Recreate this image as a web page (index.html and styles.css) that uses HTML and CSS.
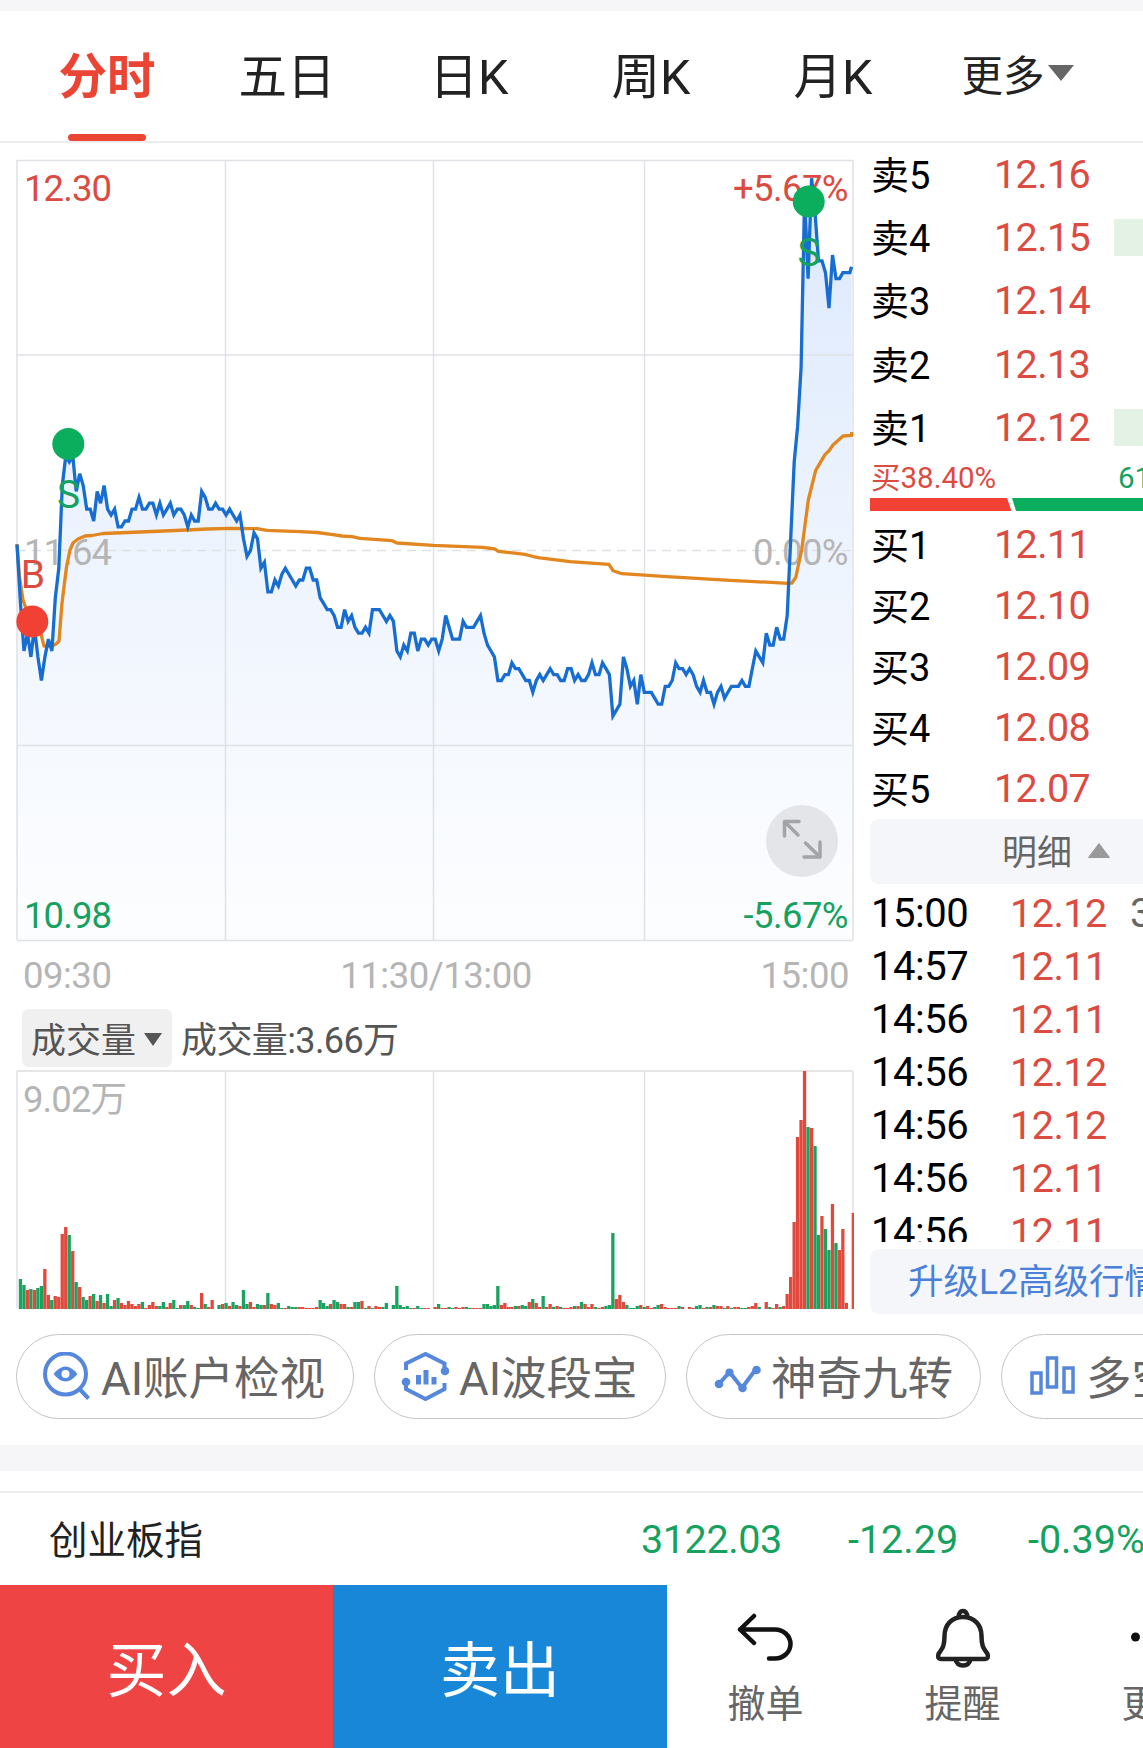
FILE: index.html
```
<!DOCTYPE html>
<html lang="zh-CN">
<head>
  <meta charset="UTF-8" />
  <title>分时</title>
  <link rel="stylesheet" href="styles.css">
</head>
<body>
  <nav class="tabs">
    <a class="tab active">分时</a>
    <a class="tab">五日</a>
    <a class="tab">日K</a>
    <a class="tab">周K</a>
    <a class="tab">月K</a>
    <a class="tab more">更多<svg width="28" height="18" viewBox="0 0 28 18"><path d="M1 1h26L14 17z" fill="#666"/></svg></a>
  </nav>

  <main class="quote">
    <section class="charts">
      <svg class="price-chart" viewBox="0 143 870 802" width="870" height="802">
        <defs>
          <linearGradient id="fill" gradientUnits="userSpaceOnUse" x1="0" y1="170" x2="0" y2="940">
            <stop offset="0" stop-color="#2a77f0" stop-opacity="0.17"/>
            <stop offset="0.5" stop-color="#2a77f0" stop-opacity="0.08"/>
            <stop offset="1" stop-color="#2a77f0" stop-opacity="0.01"/>
          </linearGradient>
        </defs>
        <path id="area" fill="url(#fill)"/>
        <path class="grid" d="M17 160.5H853M17 355H853M17 745.5H853M17 940.5H853M17 160V940M225.5 160V940M433.5 160V940M644.5 160V940M853 160V940"/>
        <path class="grid dash" d="M17 550.5H853"/>
        <text class="label up" x="24" y="201">12.30</text>
        <text class="label up end" x="848" y="201">+5.67%</text>
        <text class="label flat" x="24" y="565">11.64</text>
        <text class="label flat end" x="848" y="565">0.00%</text>
        <text class="label down" x="24" y="928">10.98</text>
        <text class="label down end" x="848" y="928">-5.67%</text>
        <polyline class="avg" points="17,544 19.5,577 23,600 30,620 41,634 44,646 52,646 56,644 59,641 62,603 66.5,567 70,550 73,543 78,539 85,536 92,535.5 103,533.5 140,532 187,530 207,529 230,528.3 257,528.7 267,530.3 300,531.7 317,532.5 333,534.7 342,536 352,536.7 360,538.3 392,540.7 397,543 433,545.3 483,547.3 495,549 498,551.3 525,554.3 535,557 540,557.8 570,561.7 609,564.3 613,570.7 622,573.7 667,576.7 730,580.3 788,583.3 791.7,583.2 795.7,577.5 801.7,550 808.3,500 815.7,470.4 825,454.6 829,450.7 833,445 843,436 851.7,435.4 851.7,432"/>
        <polyline id="price" class="price"/>
        <circle cx="32.3" cy="621.5" r="16" fill="#f04134"/>
        <circle cx="68.3" cy="444" r="16" fill="#0aae5d"/>
        <circle cx="808.7" cy="201.5" r="16" fill="#0aae5d"/>
        <text class="mark up" x="33" y="588">B</text>
        <text class="mark down" x="68.5" y="508">S</text>
        <text class="mark down" x="809" y="265.5">S</text>
        <circle cx="802" cy="841" r="36" fill="#e3e5e9"/>
        <path class="expand" d="M799 821.5H784.5V836M784.5 821.5L798 835M820 842V857H804M820 857L805.500 843"/>
      </svg>
      <div class="time-axis"><span>09:30</span><span>11:30/13:00</span><span>15:00</span></div>
      <div class="vol-head">
        <span class="vol-select">成交量<svg width="18" height="13" viewBox="0 0 18 13"><path d="M0 0h18L9 13z" fill="#555"/></svg></span>
        <span class="vol-now">成交量:3.66万</span>
      </div>
      <svg class="vol-chart" viewBox="0 1069 870 241" width="870" height="241">
        <path class="grid" d="M17 1071V1308M225.500 1071V1308M433.500 1071V1308M644.500 1071V1308M853 1071V1308"/>
        <path class="grid top" d="M17 1071H853"/>
        <text class="label flat" x="23" y="1112">9.02万</text>
        <g id="bars"></g>
      </svg>
    </section>

    <aside class="book">
      <div class="sells">
        <div class="level"><span>卖5</span><b>12.16</b></div>
        <div class="level"><span>卖4</span><b>12.15</b><i></i></div>
        <div class="level"><span>卖3</span><b>12.14</b></div>
        <div class="level"><span>卖2</span><b>12.13</b></div>
        <div class="level"><span>卖1</span><b>12.12</b><i></i></div>
      </div>
      <div class="ratio"><span class="up">买38.40%</span><span class="down">61.60%卖</span></div>
      <svg class="ratio-bar" width="273" height="13" viewBox="0 0 273 13">
        <path d="M0 0H137L141.500 13H0z" fill="#f04134"/>
        <path d="M142 0H273V13H146z" fill="#0aae5d"/>
      </svg>
      <div class="buys">
        <div class="level"><span>买1</span><b>12.11</b></div>
        <div class="level"><span>买2</span><b>12.10</b></div>
        <div class="level"><span>买3</span><b>12.09</b></div>
        <div class="level"><span>买4</span><b>12.08</b></div>
        <div class="level"><span>买5</span><b>12.07</b></div>
      </div>
      <div class="detail-bar">明细<svg width="24" height="16" viewBox="0 0 24 16"><path d="M1.500 15.500L12 1.500l10.500 14z" fill="#999" stroke="#999" stroke-linejoin="round"/></svg></div>
      <div class="deals">
        <div class="deal"><span>15:00</span><b>12.12</b><em>36594</em></div>
        <div class="deal"><span>14:57</span><b>12.11</b></div>
        <div class="deal"><span>14:56</span><b>12.11</b></div>
        <div class="deal"><span>14:56</span><b>12.12</b></div>
        <div class="deal"><span>14:56</span><b>12.12</b></div>
        <div class="deal"><span>14:56</span><b>12.11</b></div>
        <div class="deal"><span>14:56</span><b>12.11</b></div>
      </div>
      <div class="level2">升级L2高级行情</div>
    </aside>
  </main>

  <div class="chips">
    <a class="chip chip-account">
      <svg width="48" height="50" viewBox="0 0 48 50" fill="none" stroke="#5588dc" stroke-width="4">
        <circle cx="22.500" cy="22" r="20.500"/>
        <path d="M36.500 37l9 9.500"/>
        <path d="M10.500 22Q22.500 7 34.500 22Q22.500 37 10.500 22z" fill="#5588dc" stroke="none"/>
        <circle cx="22.500" cy="22" r="4" fill="#fff" stroke="none"/>
      </svg><span>AI账户检视</span>
    </a>
    <a class="chip chip-band">
      <svg width="48" height="50" viewBox="0 0 48 50" fill="none" stroke="#5588dc" stroke-width="4">
        <path d="M5 18V11.500L24.500 2L43.500 11.500V20"/>
        <path d="M5 30V37L24.500 47L43.500 37V31"/>
        <circle cx="44" cy="19" r="4.300" fill="#5588dc" stroke="none"/>
        <circle cx="5" cy="30" r="4.300" fill="#5588dc" stroke="none"/>
        <path d="M17.500 23V32.500M25 18V32.500M33 25V32.500" stroke-width="5"/>
      </svg><span>AI波段宝</span>
    </a>
    <a class="chip chip-nine">
      <svg width="48" height="50" viewBox="0 0 48 50" fill="none" stroke="#5588dc" stroke-width="4">
        <path d="M6 32L16.500 20L29 36L43 17"/>
        <g fill="#5588dc" stroke="none">
          <circle cx="6" cy="32" r="4.300"/><circle cx="16.500" cy="20.500" r="4"/><circle cx="29.500" cy="36" r="4.300"/><circle cx="43.500" cy="18" r="4.300"/>
        </g>
      </svg><span>神奇九转</span>
    </a>
    <a class="chip chip-long">
      <svg width="48" height="50" viewBox="0 0 48 50" fill="none" stroke="#5588dc" stroke-width="3.500">
        <rect x="4" y="21" width="9" height="20"/><rect x="19.500" y="6" width="9" height="29"/><rect x="36" y="16" width="9" height="24"/>
      </svg><span>多空趋势</span>
    </a>
  </div>

  <div class="gap"></div>

  <div class="index-row">
    <span class="name">创业板指</span>
    <span>3122.03</span>
    <span>-12.29</span>
    <span>-0.39%</span>
  </div>

  <footer class="actions">
    <a class="buy">买入</a>
    <a class="sell">卖出</a>
    <a class="tool">
      <svg width="60" height="60" viewBox="0 0 60 60" fill="none" stroke="#111" stroke-width="4.500" stroke-linecap="round" stroke-linejoin="round">
        <path d="M18 8L4 21.500L18 35M4 21.500H39A15.500 14.500 0 0 1 39 50.500H33"/>
      </svg>撤单
    </a>
    <a class="tool">
      <svg width="60" height="60" viewBox="0 0 60 60" fill="none" stroke="#222" stroke-width="4.500" stroke-linejoin="round">
        <path d="M30 9C18.500 9 11.500 17 11.500 28C11.500 40 8.500 41 5.500 46Q4 51 8 51H52Q56 51 54.500 46C51.500 41 48.500 40 48.500 28C48.500 17 41.500 9 30 9z"/>
        <path d="M25.500 9.500Q26 3 30 3Q34 3 34.500 9.500M22.500 51.500Q24 57.500 30 57.500Q36 57.500 37.500 51.500"/>
      </svg>提醒
    </a>
    <a class="tool">
      <svg width="60" height="60" viewBox="0 0 60 60" fill="#111"><circle cx="5.500" cy="29" r="4.500"/><circle cx="30" cy="29" r="4.500"/><circle cx="55" cy="29" r="4.500"/></svg>更多
    </a>
  </footer>

<script src="chart.js"></script>
</body>
</html>
```
FILE: styles.css
```
* { box-sizing: border-box; }
html { overflow: hidden; }
body { margin: 0; width: 1143px; height: 1748px; overflow: hidden; background: #fff; color: #000; font-family: Roboto, "Noto Sans CJK SC", sans-serif; }
b, i, em { font-weight: normal; font-style: normal; }
svg { display: block; flex: none; }
.up { color: #dc4b3f; fill: #dc4b3f; }
.down { color: #15a25f; fill: #15a25f; }

.tabs { height: 143px; border-top: 11px solid #f6f6f9; border-bottom: 2px solid #ededed; display: flex; padding-left: 20px; }
.tab { width: 182px; height: 130px; display: flex; flex-direction: column; align-items: center; justify-content: center; padding: 0 0 6px 4px; font-size: 48.500px; color: #222; white-space: nowrap; }
.tab.active { width: 174px; padding: 0; color: #ea4435; font-weight: bold; justify-content: flex-end; line-height: 78px; }
.tab.active::after { content: ""; width: 78px; height: 7px; border-radius: 4px; background: #ea4435; margin-top: 17px; }
.tab.more { flex-direction: row; width: 190px; font-size: 41.500px; padding-left: 2px; gap: 2px; }

.quote { display: flex; height: 1171px; }
.charts { width: 870px; flex: none; }
.grid { fill: none; stroke: #dfe1e5; stroke-width: 1.5; }
.grid.top { stroke: #e6e6e6; stroke-width: 2; }
.grid.dash { stroke-dasharray: 9 6; }
.label { font-size: 36.500px; letter-spacing: -0.9px; }
.end { text-anchor: end; letter-spacing: -0.6px; }
.flat { fill: #b5b5b5; }
.mark { font-size: 39px; text-anchor: middle; }
.avg { fill: none; stroke: #e2861f; stroke-width: 3.300; stroke-linejoin: round; }
.price { fill: none; stroke: #186dd0; stroke-width: 3.300; }
.expand { fill: none; stroke: #a3a4a7; stroke-width: 3.500; stroke-linecap: round; stroke-linejoin: round; }
.time-axis { height: 64px; padding: 0 21px 4px 23px; display: flex; justify-content: space-between; align-items: center; font-size: 36.500px; letter-spacing: -0.5px; color: #b5b5b5; }
.vol-head { height: 60px; padding: 0 0 2px 22px; display: flex; align-items: center; gap: 9px; font-size: 36px; color: #555; }
.vol-select { height: 58px; width: 150px; padding: 0 0 2px 9px; display: flex; align-items: center; gap: 8px; font-size: 35px; background: #f0f0f0; border-radius: 7px; }
.vol-select svg { margin-top: 4px; }
.vol-now { letter-spacing: -0.6px; padding-bottom: 3px; }

.book { width: 273px; overflow: hidden; }
.level { height: 63.200px; display: flex; align-items: center; font-size: 39.500px; white-space: nowrap; }
.level span { width: 124px; padding: 0 0 4px 1px; font-size: 38px; }
.level b { width: 120px; color: #dc4b3f; letter-spacing: -0.6px; }
.level i { flex: 1; height: 37px; background: #e3f2e5; }
.ratio { height: 34px; margin-top: 2px; padding: 0 0 5px 1px; display: flex; align-items: center; font-size: 29.500px; white-space: nowrap; }
.ratio .up { width: 247px; flex: none; }
.ratio-bar { margin-top: 3px; }
.buys .level { height: 61px; }
.buys { margin-top: 3px; }
.detail-bar { height: 65px; padding: 0 0 3px 132px; display: flex; align-items: center; gap: 15px; font-size: 35px; color: #666; background: #f5f6f9; border-radius: 9px 0 0 9px; }
.deals { margin-top: 3px; height: 355px; overflow: hidden; }
.deal { height: 53.100px; display: flex; align-items: center; font-size: 40px; white-space: nowrap; }
.deal span { width: 140px; padding-left: 1px; letter-spacing: -0.5px; flex: none; }
.deal b { width: 120px; flex: none; color: #dc4b3f; font-size: 39.500px; letter-spacing: -0.5px; }
.deal em { color: #666; }
.level2 { margin-top: 7px; height: 65px; line-height: 67px; padding-left: 38px; font-size: 35.500px; color: #4a80d8; background: #f5f6f9; border-radius: 9px 0 0 9px; white-space: nowrap; }

.chips { height: 131px; padding: 20px 0 0 16px; display: flex; gap: 20px; }
.chip { height: 85px; flex: none; display: flex; align-items: center; gap: 10px; padding-left: 26px; border: 1px solid #c4c4c4; border-radius: 43px; font-size: 45.500px; color: #666; white-space: nowrap; }
.chip span { padding-bottom: 3px; }
.chip-account { width: 338px; }
.chip-band { width: 292px; }
.chip-nine { width: 295px; }
.chip-long { width: 300px; }
.gap { height: 26px; background: #f6f6f9; }

.index-row { height: 94px; margin-top: 20px; border-top: 2px solid #ececec; padding-left: 49px; display: flex; align-items: center; font-size: 39.500px; color: #15a25f; white-space: nowrap; }
.index-row span { width: 180px; flex: none; }
.index-row .name { width: 592px; padding-bottom: 5px; font-size: 38.500px; color: #222; }
.index-row span:nth-child(2) { width: 207px; letter-spacing: -0.4px; }

.actions { height: 163px; display: flex; }
.buy, .sell { width: 333px; flex: none; display: flex; align-items: center; justify-content: center; font-size: 60px; color: #fff; padding-bottom: 3px; }
.buy { background: #ef4444; }
.sell { width: 334px; background: #1887d8; }
.tool { width: 197px; flex: none; padding-top: 23px; display: flex; flex-direction: column; align-items: center; font-size: 38px; line-height: 72px; color: #666; white-space: nowrap; }
```
FILE: chart.js
```
// price per minute, in ticks (0.01) from the previous close 11.64
const ticks = [
  1, -9, -17, -14, -18, -13, -18, -22, -18, -15, -17, -8, -3, 11, 16, 15, 16, 10, 13, 11,
  7, 7, 5, 10, 8, 11, 7, 6, 7, 4, 4, 5, 5, 7, 7, 9, 7, 7, 8, 8,
  6, 8, 6, 7, 8, 6, 7, 7, 6, 4, 6, 5, 5, 10, 9, 7, 7, 8, 7, 7,
  6, 7, 6, 5, 6, 2, -1, 0, 3, 2, -3, -2, -7, -7, -5, -6, -4, -3, -4, -5,
  -6, -5, -5, -3, -3, -5, -5, -8, -9, -10, -10, -11, -13, -13, -10, -12, -11, -13, -14, -14,
  -13, -14, -10, -10, -10, -11, -12, -11, -12, -17, -18, -16, -17, -14, -14, -17, -15, -15, -16, -15,
  -15, -17, -15, -11, -13, -15, -15, -15, -12, -13, -13, -13, -12, -11, -14, -16, -17, -18, -22, -22,
  -21, -21, -19, -20, -20, -21, -22, -22, -24, -22, -21, -22, -21, -20, -21, -21, -22, -22, -20, -20,
  -22, -21, -22, -22, -21, -19, -21, -21, -19, -20, -21, -28, -27, -26, -18, -20, -23, -22, -26, -21,
  -24, -24, -24, -25, -26, -26, -23, -23, -22, -19, -20, -20, -21, -20, -21, -23, -24, -22, -24, -24,
  -26, -24, -23, -25, -24, -23, -23, -23, -22, -23, -23, -20, -17, -18, -19, -14, -16, -16, -13, -15,
  -15, -11, 2, 15, 21, 31, 60, 46, 63, 57, 49, 49, 47, 41, 50, 46, 46, 47, 47, 47, 48
];

// bar heights per minute, negative = falling minute (green)
const volumes = [
  0, -30, -24, 19, -20, 19, -21, -23, 40, 14, -9, 13, 12, 75, 82, -74, 58, -27, 22, -12,
  -9, 13, -15, 8, -14, 6, -15, -3, 9, -11, 6, 4, 8, 5, 3, 5, -7, 1, 4, 7,
  3, -3, -7, 2, 6, -9, -1, 4, -4, -8, 4, -2, -1, 16, -5, 2, 9, 0, -4, 5,
  -6, 3, -7, -4, 3, -19, -5, 7, 2, -5, -4, 4, -16, 5, 4, -6, -1, 1, -3, -2,
  -2, 2, 2, 1, 1, 1, 2, -9, -6, -3, 5, -9, -7, 5, 5, -2, 2, -7, -7, 8,
  -1, 3, -1, 3, 2, -2, -6, 0, -4, -23, -4, -2, -3, -1, 1, -3, -1, 1, 1, 0,
  2, -5, 1, 1, -2, -1, 2, 1, 2, -2, -1, 1, 1, 1, -5, -5, -3, -4, -23, 4,
  6, 2, 2, -3, 3, -4, -3, 7, -10, 6, 2, -13, 2, 5, -2, 3, -2, 1, 1, 2,
  -3, 3, -7, 5, 2, 5, -2, 1, 2, -3, -4, -76, 10, 14, 7, -4, -1, -1, -3, 4,
  -2, 3, 1, -2, -4, 5, 2, 1, 1, 1, -3, 2, 0, 2, 1, -3, -4, 1, -2, 2,
  -4, 3, 3, -1, 3, -1, 2, 2, -1, -1, 2, 3, 6, -2, 0, 7, -2, 1, 5, -2,
  3, 15, 32, 87, 172, 189, 238, -182, 181, -163, -74, 93, -80, -59, 105, -66, 59, 80, 6, 0, 96
];

const left = 17, right = 853, step = 3.485;
const zeroY = 550.5, tickH = 5.91;

const points = ticks.map((t, i) => {
  const x = Math.min(left + i * step, 851.5);
  return x.toFixed(1) + ',' + (zeroY - t * tickH).toFixed(1);
});
document.getElementById('price').setAttribute('points', points.join(' '));
document.getElementById('area').setAttribute('d', 'M' + left + ',940L' + points.join('L') + 'L' + right + ',940z');

const bars = document.getElementById('bars');
volumes.forEach((v, i) => {
  if (!v) return;
  const h = Math.abs(v);
  const x = left + i * step - 1.7;
  const rect = document.createElementNS('http://www.w3.org/2000/svg', 'rect');
  rect.setAttribute('x', x.toFixed(1));
  rect.setAttribute('y', 1309 - h);
  rect.setAttribute('width', Math.min(3.3, right + 1 - x).toFixed(1));
  rect.setAttribute('height', h);
  rect.setAttribute('fill', v > 0 ? '#e2483b' : '#1aa35f');
  bars.appendChild(rect);
});
```
